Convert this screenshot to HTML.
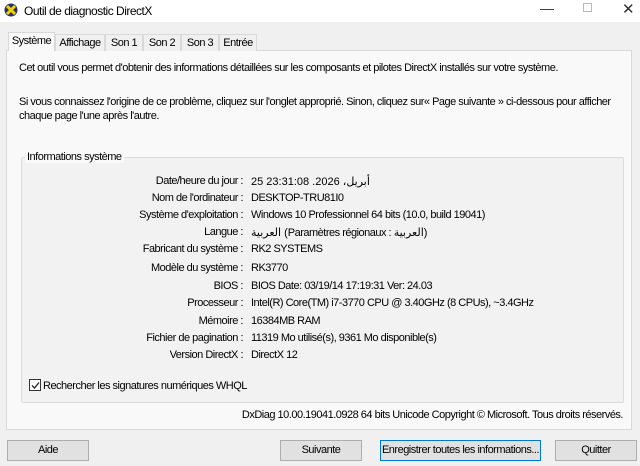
<!DOCTYPE html>
<html><head><meta charset="utf-8"><style>
*{margin:0;padding:0;box-sizing:border-box}
body{width:640px;height:466px;background:#f0f0f0;font-family:"Liberation Sans","DejaVu Sans",sans-serif;font-size:11px;letter-spacing:-0.5px;color:#000;position:relative;overflow:hidden}
.t{position:absolute;white-space:nowrap}
.title{position:absolute;left:0;top:0;width:640px;height:22px;background:#fff}
.tab{position:absolute;top:34px;height:17px;border:1px solid #d9d9d9;border-bottom:none;background:#f0f0f0;font-size:11px;padding:2px 0 0;text-align:center;white-space:nowrap}
.panel{position:absolute;left:6px;top:50px;width:626px;height:380px;border:1px solid #d9d9d9;background:#f9f9f9}
.group{position:absolute;left:21px;top:157px;width:603px;height:246px;border:1px solid #dcdcdc;background:#f2f2f2;border-radius:2px}
.lab{position:absolute;right:397px;text-align:right;white-space:nowrap}
.val{position:absolute;left:251px;white-space:nowrap}
.btn{position:absolute;top:440px;height:21px;border:1px solid #adadad;background:#e1e1e1;text-align:center;line-height:19px;font-size:11px;white-space:nowrap}
</style></head><body>
<div class="title"></div>
<svg style="position:absolute;left:4px;top:3px" width="14" height="14" viewBox="0 0 14 14"><circle cx="7" cy="7" r="6.5" fill="#2a2f6e"/><path d="M3 3L11 11M11 3L3 11" stroke="#f2d400" stroke-width="3"/></svg>
<div class="t" style="left:24px;top:4px;font-size:12px">Outil de diagnostic DirectX</div>
<div class="t" style="left:540px;top:0;font-size:14px;color:#333">&#8212;</div>
<div style="position:absolute;left:583px;top:3px;width:9px;height:9px;border:1px solid #bbb"></div>
<div class="t" style="left:622px;top:0;font-size:15px;color:#333">✕</div>
<div class="panel"></div>
<div class="tab" style="left:8px;width:47px;top:32px;height:19px;background:#f9f9f9;z-index:2">Système</div>
<div class="tab" style="left:55px;width:50px">Affichage</div>
<div class="tab" style="left:105px;width:38px">Son 1</div>
<div class="tab" style="left:143px;width:38px">Son 2</div>
<div class="tab" style="left:181px;width:38px">Son 3</div>
<div class="tab" style="left:219px;width:38px">Entrée</div>
<div class="t" style="left:19px;top:62px">Cet outil vous permet d'obtenir des informations détaillées sur les composants et pilotes DirectX installés sur votre système.</div>
<div class="t" style="left:19px;top:96px">Si vous connaissez l'origine de ce problème, cliquez sur l'onglet approprié. Sinon, cliquez sur« Page suivante » ci-dessous pour afficher</div>
<div class="t" style="left:19px;top:110px">chaque page l'une après l'autre.</div>
<div class="group"></div>
<div class="t" style="left:25px;top:151px;background:#f9f9f9;padding:0 2px">Informations système</div>
<div class="lab" style="top:175px">Date/heure du jour :</div><div class="val" style="top:175px">25 23:31:08 .2026 ،أبريل</div>
<div class="lab" style="top:192px">Nom de l'ordinateur :</div><div class="val" style="top:192px">DESKTOP-TRU81I0</div>
<div class="lab" style="top:209px">Système d'exploitation :</div><div class="val" style="top:209px">Windows 10 Professionnel 64 bits (10.0, build 19041)</div>
<div class="lab" style="top:226px">Langue :</div><div class="val" style="top:226px">العربية (Paramètres régionaux : العربية)</div>
<div class="lab" style="top:243px">Fabricant du système :</div><div class="val" style="top:243px">RK2 SYSTEMS</div>
<div class="lab" style="top:262px">Modèle du système :</div><div class="val" style="top:262px">RK3770</div>
<div class="lab" style="top:280px">BIOS :</div><div class="val" style="top:280px">BIOS Date: 03/19/14 17:19:31 Ver: 24.03</div>
<div class="lab" style="top:297px">Processeur :</div><div class="val" style="top:297px">Intel(R) Core(TM) i7-3770 CPU @ 3.40GHz (8 CPUs), ~3.4GHz</div>
<div class="lab" style="top:315px">Mémoire :</div><div class="val" style="top:315px">16384MB RAM</div>
<div class="lab" style="top:332px">Fichier de pagination :</div><div class="val" style="top:332px">11319 Mo utilisé(s), 9361 Mo disponible(s)</div>
<div class="lab" style="top:349px">Version DirectX :</div><div class="val" style="top:349px">DirectX 12</div>
<div style="position:absolute;left:29px;top:379px;width:12px;height:12px;border:1px solid #333;background:#fff"></div>
<svg style="position:absolute;left:30px;top:380px" width="11" height="11"><path d="M2 5.5L4.5 8L9 2.5" stroke="#222" stroke-width="1.3" fill="none"/></svg>
<div class="t" style="left:43px;top:380px">Rechercher les signatures numériques WHQL</div>
<div class="t" style="right:17px;top:409px">DxDiag 10.00.19041.0928 64 bits Unicode Copyright © Microsoft. Tous droits réservés.</div>
<div class="btn" style="left:7px;width:82px">Aide</div>
<div class="btn" style="left:280px;width:82px">Suivante</div>
<div class="btn" style="left:380px;width:161px;border:1px solid #0078d7">Enregistrer toutes les informations...</div>
<div class="btn" style="left:555px;width:82px">Quitter</div>
</body></html>
